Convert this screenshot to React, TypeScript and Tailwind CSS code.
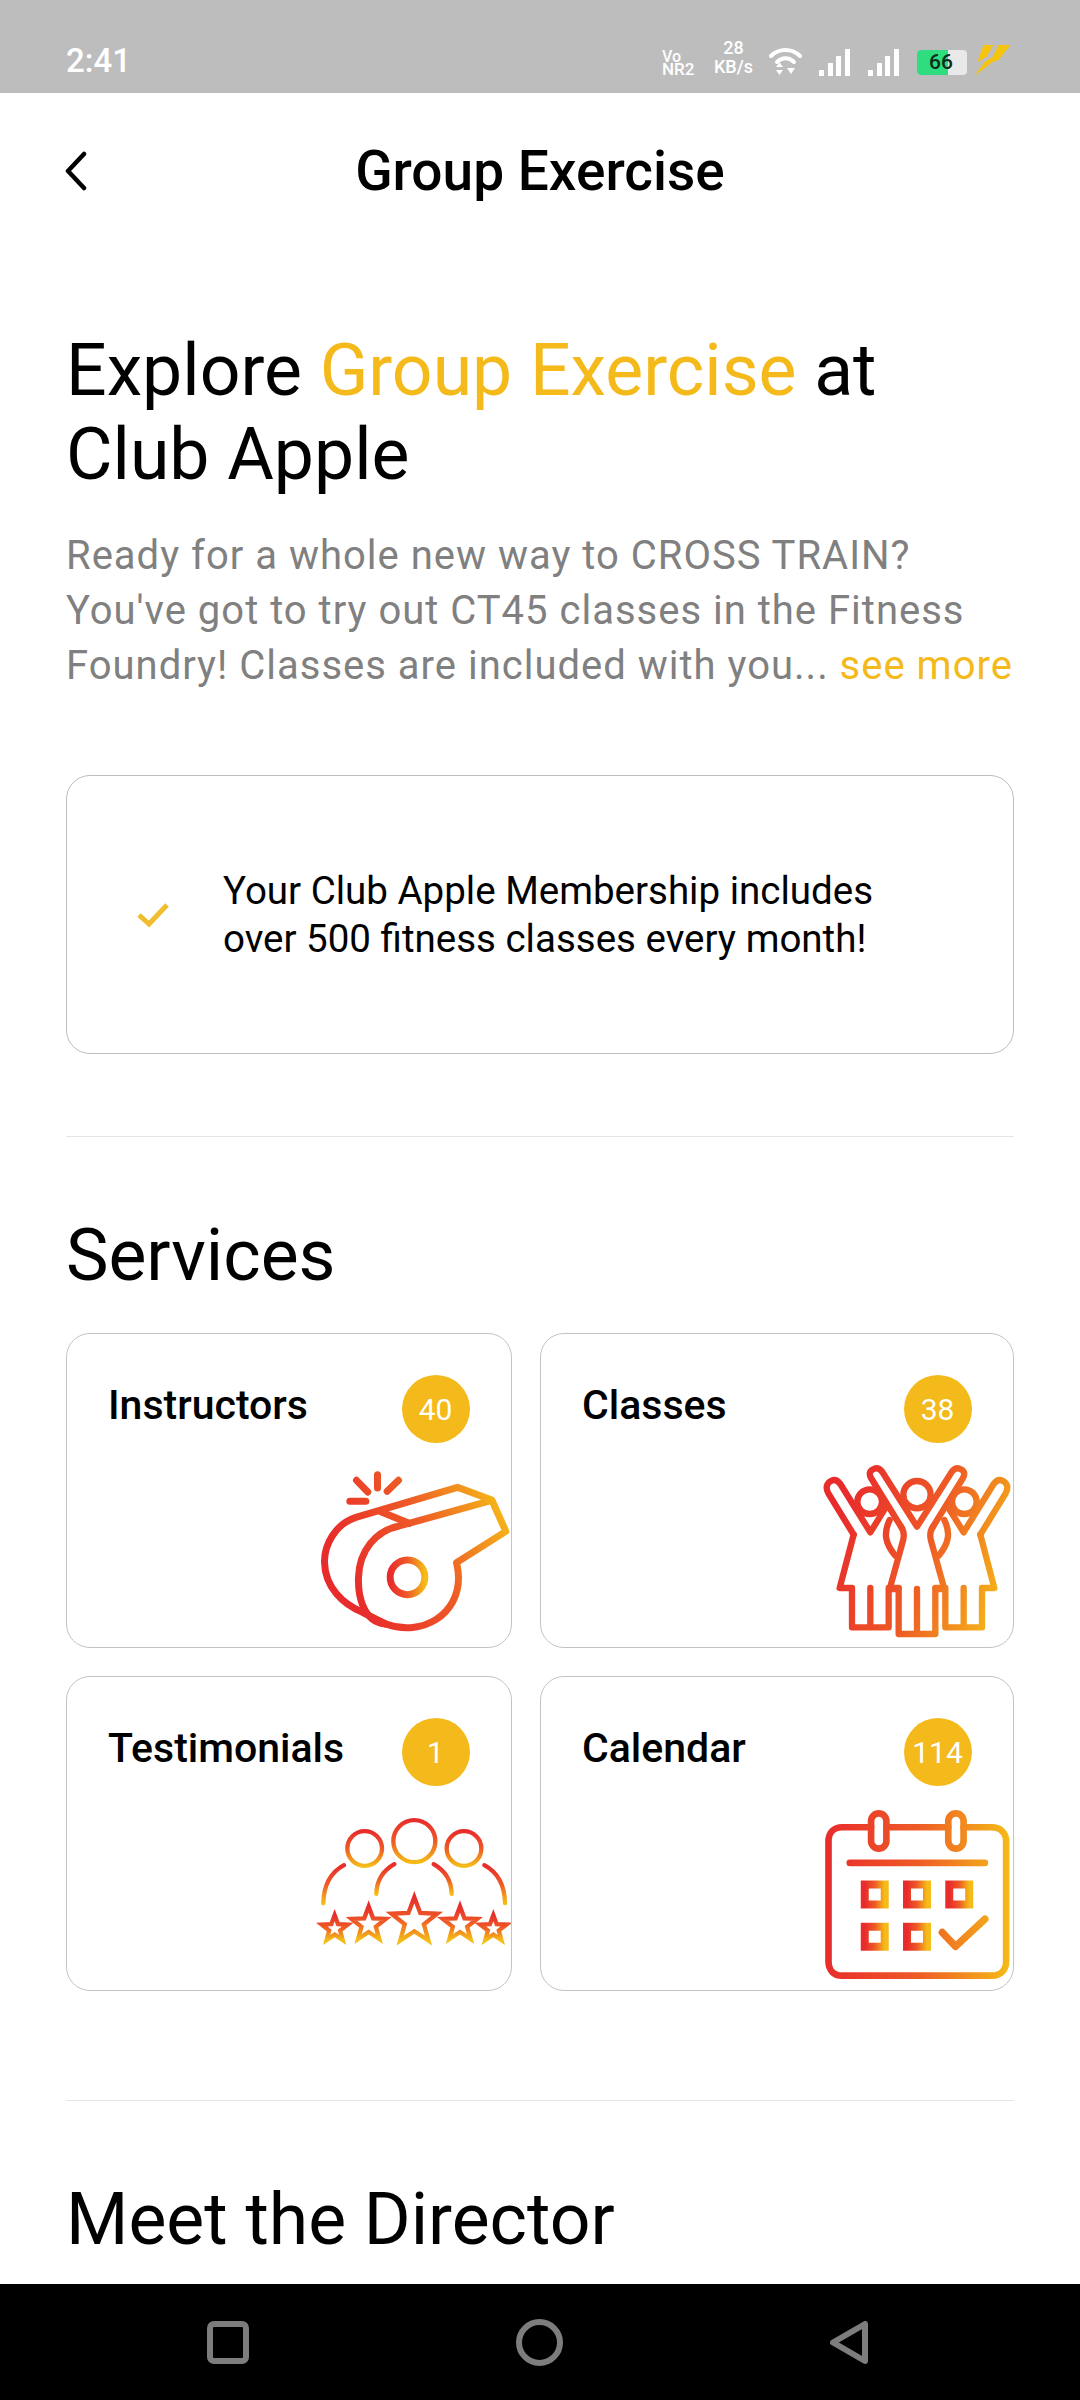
import React from 'react'

const font = { fontFamily: 'Roboto, sans-serif' }

const stops = (
    <>
        <stop offset="0" stopColor="#e82c2c" />
        <stop offset="0.5" stopColor="#ee5a26" />
        <stop offset="1" stopColor="#f5bb18" />
    </>
)

const Gradient = ({ id, x1, x2, y1 = 0, y2 = 0 }: { id: string; x1: number; x2: number; y1?: number; y2?: number }) => (
    <defs>
        <linearGradient id={id} gradientUnits="userSpaceOnUse" x1={x1} y1={y1} x2={x2} y2={y2}>
            {stops}
        </linearGradient>
    </defs>
)

// each shape gets its own gradient across its own box
const BoxGradient = ({ id, vertical }: { id: string; vertical?: boolean }) => (
    <defs>
        <linearGradient id={id} x1="0" y1="0" x2={vertical ? 0 : 1} y2={vertical ? 1 : 0}>
            {stops}
        </linearGradient>
    </defs>
)

const Whistle = () => (
    <svg viewBox="60 265 575 495" className="block w-[192px] h-[165px]" fill="none" stroke="url(#whistleG)" strokeWidth="21" strokeLinecap="round" strokeLinejoin="round">
        <Gradient id="whistleG" x1={150} x2={625} y1={600} y2={380} />
        <BoxGradient id="whistleC" />
        <path d="M235 282V322M172 299L206 334M298 299L264 332M152 362H200" />
        <path d="M260 730C190 725 176 640 178 590C180 510 230 450 300 436L575 360" />
        <path d="M260 730C370 770 480 700 478 590C478 570 474 556 472 546L620 452L578 358L475 320L170 410C110 430 75 490 76 545C78 620 130 670 190 695L260 730" />
        <path d="M245 393L330 428" />
        <circle cx="325" cy="590" r="52" stroke="url(#whistleC)" />
    </svg>
)

const Women = () => (
    <svg viewBox="65 70 570 525" className="block w-[190px] h-[175px]" fill="none" stroke="url(#womenG)" strokeWidth="19" strokeLinecap="round" strokeLinejoin="round">
        <Gradient id="womenG" x1={110} x2={630} y1={260} y2={440} />
        {/* left figure */}
        <path d="M160 282L84 158C74 140 80 126 94 120C106 114 114 122 120 130L210 275L256 201" />
        <path d="M160 282L118 442H155V560H265V442H295M210 442V552" />
        <path d="M268 238C250 275 252 305 285 345" />
        <circle cx="208" cy="183" r="37" fill="white" />
        {/* right figure */}
        <path d="M540 282L616 158C626 140 620 126 606 120C594 114 586 122 580 130L490 275L444 201" />
        <path d="M540 282L582 442H545V560H435V442H405M490 442V552" />
        <path d="M432 238C450 275 448 305 415 345" />
        <circle cx="492" cy="183" r="37" fill="white" />
        {/* middle figure */}
        <path d="M302 258L212 112C204 98 210 88 222 84C234 80 240 86 246 94L350 258L454 94C460 86 466 80 478 84C490 88 496 98 488 112L398 258" />
        <path d="M302 258C312 272 312 285 308 300L268 445H295V580H405V445H432L392 300C388 285 388 272 398 258" />
        <path d="M350 445V572" />
        <circle cx="350" cy="162" r="41" fill="white" />
    </svg>
)

const starPoints = (cx: number, cy: number, r: number) => {
    const pts: string[] = []
    for (let i = 0; i < 10; i++) {
        const rad = i % 2 === 0 ? r : r * 0.42
        const a = -Math.PI / 2 + (i * Math.PI) / 5
        pts.push(`${cx + rad * Math.cos(a)},${cy + rad * Math.sin(a)}`)
    }
    return pts.join(' ')
}

const Reviews = () => (
    <svg viewBox="50 80 585 395" className="block w-[195px] h-[132px]" fill="none" stroke="url(#reviewsG)" strokeWidth="13" strokeLinecap="round" strokeLinejoin="miter">
        <BoxGradient id="reviewsG" vertical />
        <circle cx="196" cy="174" r="52" />
        <circle cx="345" cy="152" r="63" />
        <circle cx="494" cy="174" r="52" />
        <path d="M134 224C95 245 73 285 72 338" />
        <path d="M285 221C255 238 232 268 231 310" />
        <path d="M403 221C433 238 456 268 457 310" />
        <path d="M555 224C594 245 616 285 617 338" />
        <g strokeWidth="13">
            <polygon points={starPoints(345, 392, 72)} />
            <polygon points={starPoints(208, 402, 54)} />
            <polygon points={starPoints(482, 402, 54)} />
            <polygon points={starPoints(106, 415, 41)} />
            <polygon points={starPoints(582, 415, 41)} />
        </g>
    </svg>
)

const CalendarIcon = () => (
    <svg viewBox="65 50 570 520" className="block w-[190px] h-[173px]" fill="none" stroke="url(#calG)" strokeWidth="20" strokeLinecap="round" strokeLinejoin="round">
        <Gradient id="calG" x1={70} x2={630} />
        <BoxGradient id="calBox" />
        <path d="M212 108H125C100 108 84 124 84 150V510C84 538 100 554 125 554H575C600 554 618 538 618 510V150C618 124 600 108 575 108H490M258 108H444" />
        <rect x="212" y="66" width="46" height="106" rx="23" />
        <rect x="444" y="66" width="46" height="106" rx="23" />
        <path d="M148 215H554" />
        <g strokeWidth="24" stroke="url(#calBox)" strokeLinejoin="miter">
            <rect x="193" y="280" width="60" height="60" />
            <rect x="320" y="280" width="60" height="60" />
            <rect x="447" y="280" width="60" height="60" />
            <rect x="193" y="407" width="60" height="60" />
            <rect x="320" y="407" width="60" height="60" />
        </g>
        <path d="M426 424L466 466L554 384" strokeWidth="22" />
    </svg>
)

const ServiceCard = ({ title, count, icon, iconClass }: { title: string; count: number; icon: React.ReactNode; iconClass: string }) => (
    <div className="h-[315px] border border-[#c4c4c4] rounded-[24px] flex flex-col overflow-hidden">
        <div className="flex justify-between items-start pt-[41px] pl-[41px] pr-[41.500px]">
            <span className="mt-[7px] text-[41px] leading-[46px] font-medium text-black">{title}</span>
            <span className="w-[68px] h-[68px] rounded-full bg-[#f4b91a] text-white text-[30px] flex items-center justify-center">{count}</span>
        </div>
        <div className={iconClass}>{icon}</div>
    </div>
)

const SignalBars = () => (
    <svg width="31" height="27" viewBox="0 0 31 27" fill="white">
        <rect x="0" y="21" width="5" height="6" />
        <rect x="9" y="14" width="5" height="13" />
        <rect x="17" y="7" width="5" height="20" />
        <rect x="26" y="0" width="5" height="27" />
    </svg>
)

const StatusBar = () => (
    <div className="h-[93px] bg-[#bdbdbd] flex items-end justify-between pl-[66px] pr-[67px] pb-[14px] text-white shrink-0">
        <span className="text-[33px] leading-[36px] font-medium">2:41</span>
        <div className="flex items-end h-[36px] mb-[3px]">
            <div className="w-[33px] text-[16px] leading-[13px] font-medium">
                <div>Vo</div>
                <div className="text-[17px]">NR2</div>
            </div>
            <div className="ml-[18px] w-[41px] text-[18px] leading-[19px] font-medium text-center whitespace-nowrap">
                <div>28</div>
                <div>KB/s</div>
            </div>
            <svg className="ml-[15px]" width="33" height="28" viewBox="0 0 33 28" fill="none" stroke="white" strokeLinecap="round">
                <path d="M2 8C10 0 23 0 31 8" strokeWidth="4" />
                <path d="M8 14C13 9 20 9 25 14" strokeWidth="4" />
                <path d="M7 19L10.500 14.500L14 19ZM7 22H14L10.500 27Z" fill="white" strokeWidth="0" />
                <path d="M18 20H26L22 26Z" fill="white" strokeWidth="0" />
            </svg>
            <div className="ml-[17px]"><SignalBars /></div>
            <div className="ml-[18px]"><SignalBars /></div>
            <div className="relative ml-[18px] mb-[1px] w-[50px] h-[25px] rounded-[4px] bg-[#e9e9e9] overflow-hidden">
                <div className="w-[31px] h-full bg-[#2fdc7f]" />
                <span className="absolute inset-0 flex items-center justify-center text-[21px] font-medium text-[#0b2e1c] pr-[2px]">66</span>
            </div>
            <svg className="ml-[6px]" width="40" height="32" viewBox="10 5 37 32" fill="#f5c40f">
                <path d="M19 6H29L22 18L13 23Z" />
                <path d="M34 6H46L34 21L28 23L10 37L20 23L28 18Z" />
            </svg>
        </div>
    </div>
)

const NavBar = () => (
    <div className="h-[116px] bg-black flex items-center pl-[207px] gap-[267px] shrink-0">
        <svg width="42" height="43" viewBox="0 0 42 43" fill="none" stroke="#7d7d7d"><rect x="3" y="3" width="36" height="37" rx="4" strokeWidth="6" /></svg>
        <svg width="47" height="47" viewBox="0 0 47 47" fill="none" stroke="#7d7d7d"><circle cx="23.500" cy="23.500" r="20.500" strokeWidth="6" /></svg>
        <svg width="38" height="43" viewBox="0 0 38 43" fill="none" stroke="#7d7d7d" strokeLinejoin="round"><path d="M35 3V40L3 21.500Z" strokeWidth="6" /></svg>
    </div>
)

export default function App() {
    return (
        <div className="w-[1080px] h-[2400px] flex flex-col bg-white overflow-hidden" style={font}>
            <StatusBar />
            <div className="flex-1 overflow-hidden px-[66px]">
                <header className="relative h-[156px] flex items-center justify-center">
                    <svg className="absolute left-[-2px] top-[58px]" width="24" height="40" viewBox="0 0 24 40" fill="none" stroke="black" strokeWidth="4.500" strokeLinecap="round" strokeLinejoin="round">
                        <path d="M20 3L4 20L20 37" />
                    </svg>
                    <h1 className="text-[55px] font-medium text-black">Group Exercise</h1>
                </header>

                <h2 className="mt-[80px] text-[71.500px] leading-[84px] text-black">
                    Explore <span className="text-[#f4b91a]">Group Exercise</span> at Club Apple
                </h2>
                <p className="mt-[31px] text-[40px] leading-[55px] text-[#808080] tracking-[1px] whitespace-nowrap">
                    Ready for a whole new way to CROSS TRAIN?<br />
                    You've got to try out CT45 classes in the Fitness<br />
                    Foundry! Classes are included with you... <span className="text-[#f4b91a]">see more</span>
                </p>

                <div className="mt-[82px] h-[279px] border border-[#bdbdbd] rounded-[24px] flex items-center pl-[70px]">
                    <svg width="32" height="26" viewBox="0 0 32 26" fill="none" stroke="#f0bd2c" strokeWidth="5"><path d="M2 13L12 22L30 3" /></svg>
                    <p className="ml-[54px] text-[38.500px] leading-[48px] text-black whitespace-nowrap">
                        Your Club Apple Membership includes<br />
                        over 500 fitness classes every month!
                    </p>
                </div>

                <div className="mt-[82px] h-px bg-[#e6e6e6]" />

                <h2 className="mt-[77px] text-[71.500px] leading-[84px] text-black">Services</h2>

                <div className="mt-[35px] grid grid-cols-[446px_474px] gap-[28px]">
                    <ServiceCard title="Instructors" count={40} icon={<Whistle />} iconClass="mt-auto ml-auto mb-[13px]" />
                    <ServiceCard title="Classes" count={38} icon={<Women />} iconClass="mt-auto ml-auto mr-[1px] mb-[8px]" />
                    <ServiceCard title="Testimonials" count={1} icon={<Reviews />} iconClass="mt-auto ml-auto mb-[41px]" />
                    <ServiceCard title="Calendar" count={114} icon={<CalendarIcon />} iconClass="mt-auto ml-auto mr-[1px] mb-[9px]" />
                </div>

                <div className="mt-[109px] h-px bg-[#e6e6e6]" />

                <h2 className="mt-[77px] text-[71.500px] leading-[84px] text-black whitespace-nowrap">Meet the Director</h2>
            </div>
            <NavBar />
        </div>
    )
}
